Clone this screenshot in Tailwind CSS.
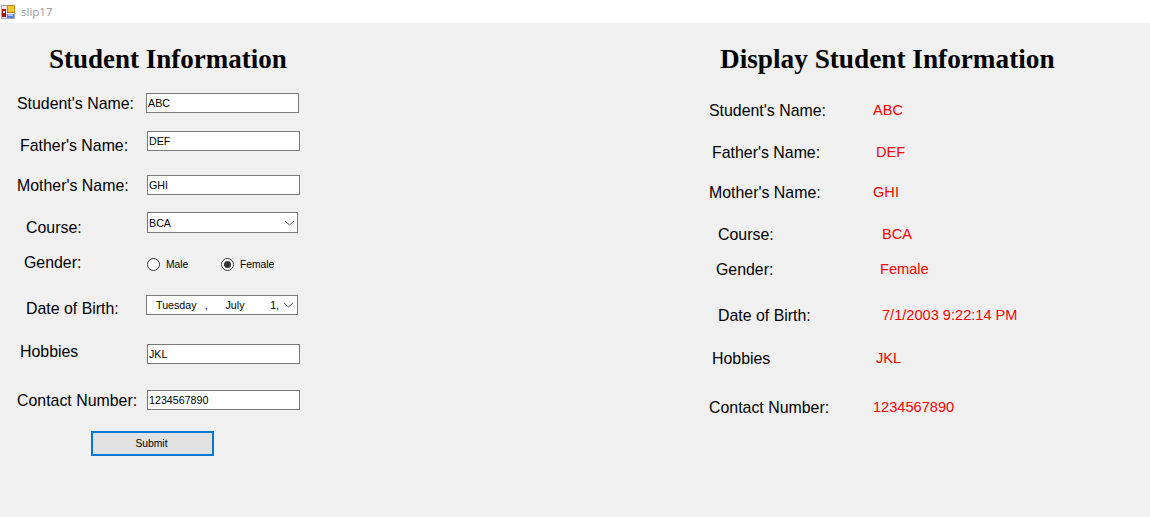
<!DOCTYPE html>
<html lang="en">
<head>
  <meta charset="UTF-8" />
  <title>slip17</title>
  <script src="https://cdn.jsdelivr.net/npm/@tailwindcss/browser@4"></script>
</head>
<body class="bg-[#f0f0f0] h-[517px] overflow-hidden font-['Liberation_Sans',sans-serif] text-black">

  <!-- Title bar -->
  <div class="bg-white h-[23px] flex items-center">
    <svg class="ml-[1px] w-[14px] h-[14px]" viewBox="0 0 14 14">
      <rect x="0.5" y="0.5" width="13" height="13" fill="#ececec" stroke="#a8a8a8"/>
      <rect x="1" y="4" width="4" height="8" fill="#b01010"/>
      <rect x="2" y="6" width="2" height="2" fill="#f4f4f4"/>
      <rect x="6" y="0" width="8" height="8" fill="#b98a1a"/>
      <rect x="7" y="1" width="6" height="6" fill="#f8c530"/>
      <rect x="6" y="9" width="7" height="4" fill="#4f81dd"/>
      <rect x="7" y="9" width="5" height="2" fill="#a9c4f2"/>
    </svg>
    <span class="ml-[6px] text-[11.5px] text-[#999999] font-['Open_Sans',sans-serif]">slip17</span>
  </div>

  <div class="flex">
    <!-- Input form -->
    <div class="w-[709px] shrink-0">
      <div class="h-[70px] pt-[18px] pl-[49px]">
        <h1 class="font-['Liberation_Serif',serif] font-bold text-[27px] leading-[37px]">Student Information</h1>
      </div>

      <div class="flex h-[38px]">
        <label class="w-[146px] pl-[17px] mt-[2px] text-[15.9px] leading-[18px]">Student's Name:</label>
        <div class="w-[153px] h-[20px] bg-white border border-[#7a7a7a] px-[1px] text-[10.7px] leading-[18px]">ABC</div>
      </div>
      <div class="flex h-[44px]">
        <label class="w-[147px] pl-[20px] mt-[6px] text-[15.9px] leading-[18px]">Father's Name:</label>
        <div class="w-[153px] h-[20px] bg-white border border-[#7a7a7a] px-[1px] text-[10.7px] leading-[18px]">DEF</div>
      </div>
      <div class="flex h-[37px]">
        <label class="w-[147px] pl-[17px] mt-[2px] text-[15.9px] leading-[18px]">Mother's Name:</label>
        <div class="w-[153px] h-[20px] bg-white border border-[#7a7a7a] px-[1px] text-[10.7px] leading-[18px]">GHI</div>
      </div>
      <div class="flex h-[41px]">
        <label class="w-[147px] pl-[26px] mt-[7px] text-[15.9px] leading-[18px]">Course:</label>
        <div class="w-[151px] h-[21px] bg-white border border-[#7a7a7a] pl-[1px] pr-[2px] text-[10.7px] leading-[18px] flex justify-between items-center">
          <span>BCA</span>
          <svg class="w-[11px] h-[6px]" viewBox="0 0 11 6" fill="none" stroke="#555555"><path d="M1 1l4.5 4 4.5-4"/></svg>
        </div>
      </div>
      <div class="flex h-[42px]">
        <label class="w-[147px] pl-[24px] mt-[1px] text-[15.9px] leading-[18px]">Gender:</label>
        <div class="flex items-center h-[13px] mt-[5px] text-[10.3px]">
          <span class="w-[13px] h-[13px] rounded-full bg-white border border-[#333333]"></span>
          <span class="ml-[6px] w-[55px] pt-[1px]">Male</span>
          <span class="w-[13px] h-[13px] rounded-full bg-white border border-[#333333] flex items-center justify-center">
            <span class="w-[7px] h-[7px] rounded-full bg-[#333333]"></span>
          </span>
          <span class="ml-[6px] pt-[1px]">Female</span>
        </div>
      </div>
      <div class="flex h-[47px]">
        <label class="w-[146px] pl-[26px] mt-[5px] text-[15.9px] leading-[18px]">Date of Birth:</label>
        <div class="w-[152px] h-[20px] bg-white border border-[#7a7a7a] pl-[9px] pr-[3px] text-[10.7px] leading-[18px] flex items-center">
          <span class="w-[49px]">Tuesday</span>
          <span class="w-[21px]">,</span>
          <span class="w-[36px]">July</span>
          <span class="w-[18px] text-right">1,</span>
          <svg class="ml-[4px] w-[11px] h-[6px]" viewBox="0 0 11 6" fill="none" stroke="#555555"><path d="M1 1l4.5 4 4.5-4"/></svg>
        </div>
      </div>
      <div class="flex h-[48px]">
        <label class="w-[147px] pl-[20px] mt-[1px] text-[15.9px] leading-[18px]">Hobbies</label>
        <div class="w-[153px] h-[20px] mt-[2px] bg-white border border-[#7a7a7a] px-[1px] text-[10.7px] leading-[18px]">JKL</div>
      </div>
      <div class="flex h-[41px]">
        <label class="w-[147px] pl-[17px] mt-[2px] text-[15.9px] leading-[18px]">Contact Number:</label>
        <div class="w-[153px] h-[20px] bg-white border border-[#7a7a7a] px-[1px] text-[10.7px] leading-[18px]">1234567890</div>
      </div>
      <button class="block ml-[91px] w-[123px] h-[25px] bg-[#e1e1e1] border-2 border-[#0078d7] text-[10.3px] pr-[2px]">Submit</button>
    </div>

    <!-- Display panel -->
    <div class="flex-1">
      <div class="h-[79px] pt-[18px] pl-[11px]">
        <h1 class="font-['Liberation_Serif',serif] font-bold text-[27.25px] leading-[37px]">Display Student Information</h1>
      </div>
      <div class="flex flex-col text-[15.9px] leading-[18px]">
        <div class="flex"><span class="w-[164px]">Student's Name:</span><span class="-mt-[1px] text-[14.6px] text-[#ff0000]">ABC</span></div>
        <div class="flex mt-[24px] ml-[3px]"><span class="w-[164px]">Father's Name:</span><span class="-mt-[1px] text-[14.6px] text-[#ff0000]">DEF</span></div>
        <div class="flex mt-[22px]"><span class="w-[164px]">Mother's Name:</span><span class="-mt-[1px] text-[14.6px] text-[#ff0000]">GHI</span></div>
        <div class="flex mt-[24px] ml-[9px]"><span class="w-[164px]">Course:</span><span class="-mt-[1px] text-[14.6px] text-[#ff0000]">BCA</span></div>
        <div class="flex mt-[17px] ml-[7px]"><span class="w-[164px]">Gender:</span><span class="-mt-[1px] text-[14.6px] text-[#ff0000]">Female</span></div>
        <div class="flex mt-[28px] ml-[9px]"><span class="w-[164px]">Date of Birth:</span><span class="-mt-[1px] text-[14.6px] text-[#ff0000]">7/1/2003 9:22:14 PM</span></div>
        <div class="flex mt-[25px] ml-[3px]"><span class="w-[164px]">Hobbies</span><span class="-mt-[1px] text-[14.6px] text-[#ff0000]">JKL</span></div>
        <div class="flex mt-[31px]"><span class="w-[164px]">Contact Number:</span><span class="-mt-[1px] text-[14.6px] text-[#ff0000]">1234567890</span></div>
      </div>
    </div>
  </div>
</body>
</html>
